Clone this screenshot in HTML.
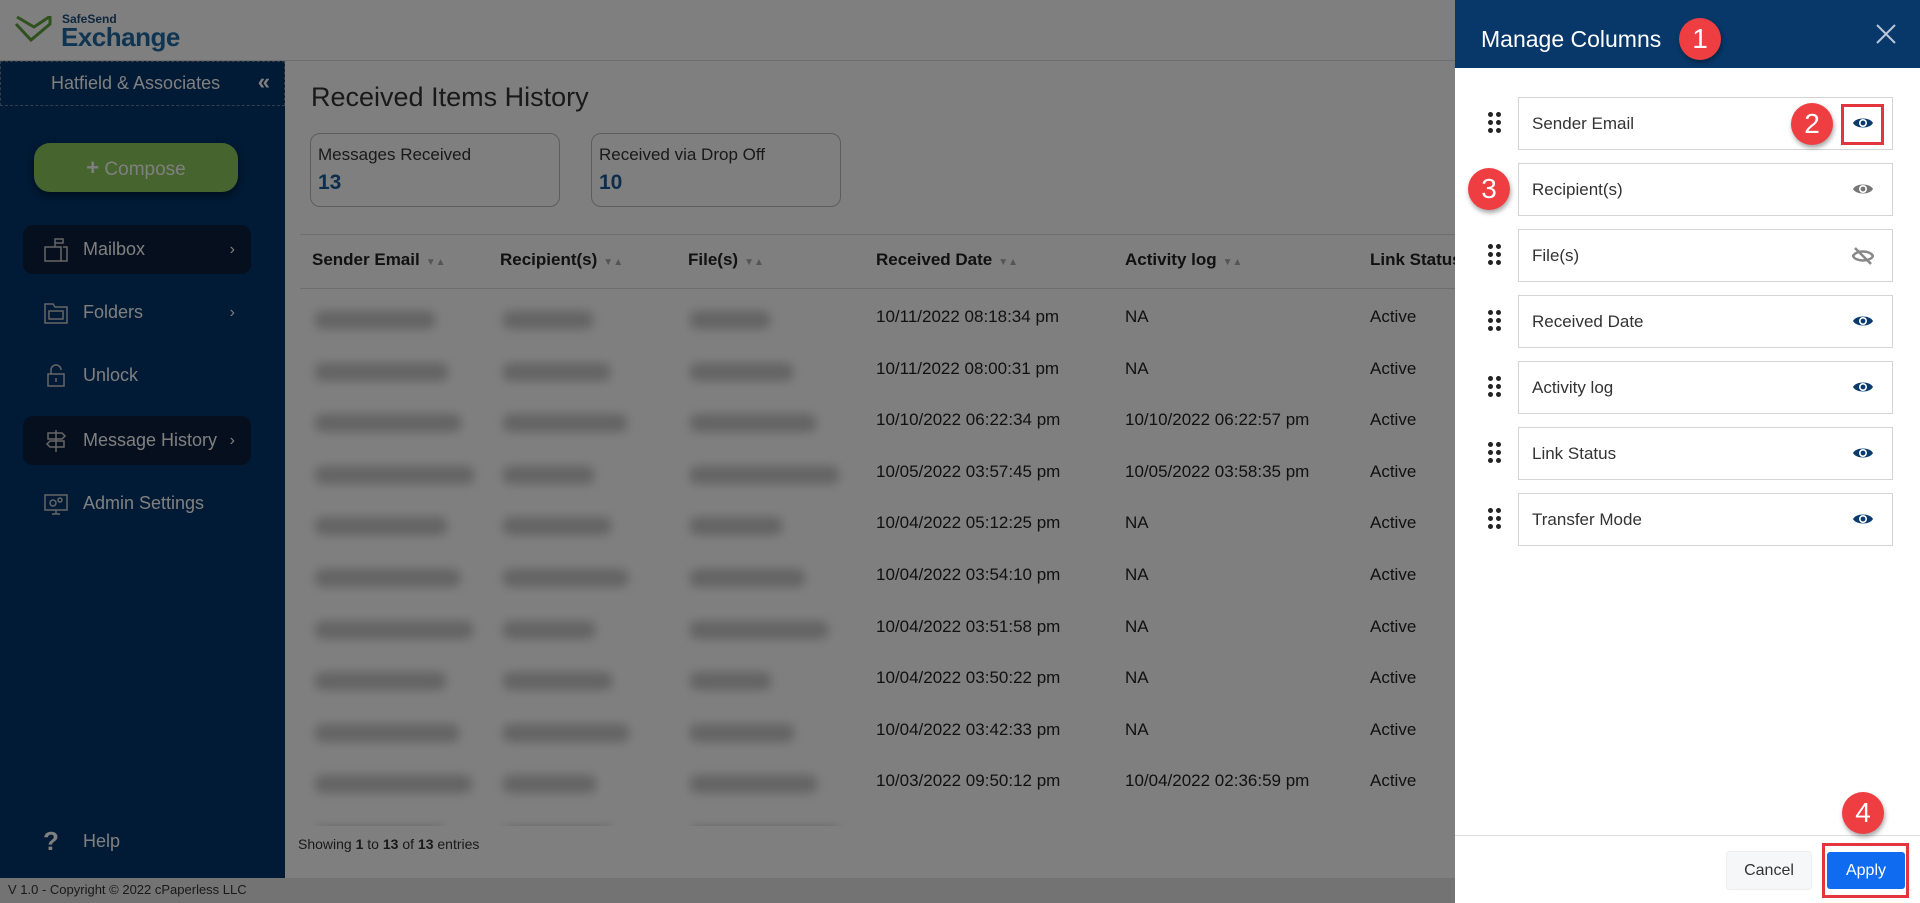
<!DOCTYPE html>
<html><head><meta charset="utf-8"><style>
*{box-sizing:border-box;margin:0;padding:0}
body{width:1920px;height:903px;overflow:hidden;font-family:"Liberation Sans",sans-serif;background:#fff;position:relative;color:#222}
.abs{position:absolute}
#hdr{left:0;top:0;width:1920px;height:61px;background:#fff;border-bottom:1px solid #ddd}
#side{left:0;top:61px;width:285px;height:817px;background:#02346a}
#foot{left:0;top:878px;width:1920px;height:25px;background:#e6e6e6;font-size:13px;color:#333;padding:4px 8px}
.nav{position:absolute;left:23px;width:228px;height:49px;border-radius:10px;color:#fff;font-size:18px;padding-left:60px;line-height:49px}
.nav.dk{background:#0a1f3d}
.nav .ar{position:absolute;right:16px;top:0;font-size:16px}
.nav svg{position:absolute;left:20px;top:12px}
.th{position:absolute;top:250px;font-size:17px;font-weight:bold;color:#222}
.th i{font-style:normal;color:#aaa;font-size:10px;margin-left:6px}
.td{position:absolute;font-size:17px;color:#222}
.bl{position:absolute;height:18px;background:#c8c8c8;filter:blur(5px);border-radius:6px}
#ov{left:0;top:0;width:1455px;height:903px;background:rgba(0,0,0,.5)}
#panel{left:1455px;top:0;width:465px;height:903px;background:#fff}
#ph{left:0;top:0;width:465px;height:68px;background:#073869;color:#fff;font-size:23px;padding:26px 26px}
.it{position:absolute;left:63px;width:375px;height:53px;border:1px solid #d4d4d4;font-size:17px;color:#333;padding:0 13px;line-height:51px}
.it svg{position:absolute;right:18px;top:17px}
.dots{position:absolute;left:33px;width:14px;height:22px}
.dots b{position:absolute;width:5px;height:5px;border-radius:50%;background:#222}
.mk{position:absolute;width:42px;height:42px;border-radius:50%;background:#ef3e42;color:#fff;font-size:28px;text-align:center;line-height:42px;box-shadow:1px 3px 5px rgba(0,0,0,.35)}
</style></head><body>
<div id="hdr" class="abs">
<svg class="abs" style="left:14px;top:14px" width="40" height="30" viewBox="0 0 40 30"><path d="M3 3 L20 13 L35 3 M2 10 L17 26 L36 10 L36 2" fill="none" stroke="#5ea33a" stroke-width="3"/></svg>
<div class="abs" style="left:62px;top:12px;font-size:12px;font-weight:bold;color:#1f4d7a">SafeSend</div>
<div class="abs" style="left:61px;top:22px;font-size:26px;font-weight:bold;color:#1f6aa5;letter-spacing:-0.5px">Exchange</div>
</div>
<div id="side" class="abs">
<div class="abs" style="left:0;top:0;width:285px;height:45px;border:1px dashed #6a7c95;color:#fff;font-size:18px;padding:11px 0 0 50px">Hatfield &amp; Associates<span style="position:absolute;right:14px;top:7px;font-size:22px;font-weight:bold">«</span></div>
<div class="abs" style="left:34px;top:82px;width:204px;height:49px;border-radius:16px;background:#8dc95a;color:#fff;font-size:19px;text-align:center;line-height:49px;box-shadow:0 4px 8px rgba(0,0,0,.4)"><b style="font-size:22px">+</b> Compose</div>
<div class="nav dk" style="top:164px"><svg width="26" height="26" viewBox="0 0 26 26" fill="none" stroke="#ccc" stroke-width="1.5"><rect x="2" y="10" width="16" height="14"/><path d="M12 10V2h8v4h-8M20 10h4v14h-6"/></svg>Mailbox<span class="ar">›</span></div>
<div class="nav" style="top:227px"><svg width="26" height="26" viewBox="0 0 26 26" fill="none" stroke="#ccc" stroke-width="1.5"><path d="M2 4h8l2 3h12v16H2z M6 11h14v8H6z"/></svg>Folders<span class="ar">›</span></div>
<div class="nav" style="top:290px"><svg width="26" height="26" viewBox="0 0 26 26" fill="none" stroke="#ccc" stroke-width="1.5"><rect x="5" y="11" width="16" height="12"/><path d="M8 11V7a5 5 0 0 1 10 0"/><path d="M13 15v4"/></svg>Unlock</div>
<div class="nav dk" style="top:355px"><svg width="26" height="26" viewBox="0 0 26 26" fill="none" stroke="#ccc" stroke-width="1.5"><path d="M13 2v22M5 5h14l3 3-3 3H5zM21 13H7l-3 3 3 3h14z"/></svg>Message History<span class="ar">›</span></div>
<div class="nav" style="top:418px"><svg width="26" height="26" viewBox="0 0 26 26" fill="none" stroke="#ccc" stroke-width="1.5"><rect x="2" y="4" width="22" height="15"/><path d="M9 23h8M13 19v4"/><circle cx="10" cy="12" r="3"/><circle cx="17" cy="9" r="2"/></svg>Admin Settings</div>
<div class="nav" style="top:756px;font-size:18px"><span style="position:absolute;left:20px;font-size:26px;font-weight:bold">?</span>Help</div>
</div>
<div id="foot" class="abs">V 1.0 - Copyright © 2022  cPaperless LLC</div>
<div class="abs" style="left:311px;top:82px;font-size:27px;color:#333">Received Items History</div>
<div class="abs" style="left:310px;top:133px;width:250px;height:74px;border:1px solid #bbb;border-radius:10px;padding:11px 7px"><div style="font-size:17px;color:#333">Messages Received</div><div style="font-size:21px;font-weight:bold;color:#1a5b9a;margin-top:6px">13</div></div>
<div class="abs" style="left:591px;top:133px;width:250px;height:74px;border:1px solid #bbb;border-radius:10px;padding:11px 7px"><div style="font-size:17px;color:#333">Received via Drop Off</div><div style="font-size:21px;font-weight:bold;color:#1a5b9a;margin-top:6px">10</div></div>
<div class="abs" style="left:300px;top:234px;width:1155px;height:1px;background:#ddd"></div>
<div class="abs" style="left:300px;top:288px;width:1155px;height:1px;background:#ddd"></div>
<div class="th" style="left:312px">Sender Email<i>▼▲</i></div>
<div class="th" style="left:500px">Recipient(s)<i>▼▲</i></div>
<div class="th" style="left:688px">File(s)<i>▼▲</i></div>
<div class="th" style="left:876px">Received Date<i>▼▲</i></div>
<div class="th" style="left:1125px">Activity log<i>▼▲</i></div>
<div class="th" style="left:1370px">Link Status</div>
<div id="rows"></div>
<script>
var d=[["10/11/2022 08:18:34 pm","NA"],["10/11/2022 08:00:31 pm","NA"],["10/10/2022 06:22:34 pm","10/10/2022 06:22:57 pm"],["10/05/2022 03:57:45 pm","10/05/2022 03:58:35 pm"],["10/04/2022 05:12:25 pm","NA"],["10/04/2022 03:54:10 pm","NA"],["10/04/2022 03:51:58 pm","NA"],["10/04/2022 03:50:22 pm","NA"],["10/04/2022 03:42:33 pm","NA"],["10/03/2022 09:50:12 pm","10/04/2022 02:36:59 pm"],["10/03/2022 06:42:38 pm","10/10/2022 07:50:51 pm"]];
var h="";for(var i=0;i<d.length;i++){var y=307+i*51.6;
h+='<div class="bl" style="left:315px;top:'+(y+4)+'px;width:'+(120+(i*13)%40)+'px"></div><div class="bl" style="left:503px;top:'+(y+4)+'px;width:'+(90+(i*17)%50)+'px"></div><div class="bl" style="left:690px;top:'+(y+4)+'px;width:'+(80+(i*23)%80)+'px"></div>';
h+='<div class="td" style="left:876px;top:'+y+'px">'+d[i][0]+'</div><div class="td" style="left:1125px;top:'+y+'px">'+d[i][1]+'</div><div class="td" style="left:1370px;top:'+y+'px">Active</div>';}
document.getElementById("rows").innerHTML=h;
</script>
<div class="abs" style="left:285px;top:826px;width:1170px;height:52px;background:#fff"></div>
<div class="abs" style="left:298px;top:836px;font-size:14px;color:#333">Showing <b>1</b> to <b>13</b> of <b>13</b> entries</div>
<div id="ov" class="abs"></div>
<div id="panel" class="abs">
<div id="ph" class="abs">Manage Columns<svg style="position:absolute;right:24px;top:24px" width="20" height="20" viewBox="0 0 20 20"><path d="M1 1L19 19M19 1L1 19" stroke="#b9c6d6" stroke-width="2"/></svg></div>
<div id="items"></div>
<div class="abs" style="left:0;top:835px;width:465px;height:1px;background:#ddd"></div>
<div class="abs" style="left:271px;top:851px;width:86px;height:39px;background:#f6f7f8;border:1px solid #eee;border-radius:3px;font-size:16px;color:#333;text-align:center;line-height:37px">Cancel</div>
<div class="abs" style="left:372px;top:852px;width:78px;height:37px;background:#0f6cf0;border-radius:3px;font-size:16px;color:#fff;text-align:center;line-height:37px">Apply</div>
<div class="abs" style="left:367px;top:843px;width:87px;height:55px;border:3px solid #e3353c"></div>
<div class="abs" style="left:386px;top:104px;width:43px;height:41px;border:3px solid #e3353c"></div>
</div>
<script>
var n=["Sender Email","Recipient(s)","File(s)","Received Date","Activity log","Link Status","Transfer Mode"];
var eye='<svg width="22" height="16" viewBox="0 0 22 16"><path d="M1 8C4 2 18 2 21 8C18 14 4 14 1 8Z" fill="@@"/><circle cx="11" cy="8" r="4" fill="#fff"/><circle cx="11" cy="8" r="2.4" fill="@@"/></svg>';
var off='<svg width="22" height="18" viewBox="0 0 22 18"><path d="M1 9C4 3 18 3 21 9C18 15 4 15 1 9Z" fill="none" stroke="#888" stroke-width="2.5"/><path d="M3 1L19 17" stroke="#888" stroke-width="2.5"/></svg>';
var h="";for(var i=0;i<7;i++){var y=97+i*66;
var ic=i==2?off:eye.split("@@").join(i==1?"#777":"#0a3b6e");
h+='<div class="it" style="top:'+y+'px">'+n[i]+ic+'</div>';
if(i!=1)h+='<div class="dots" style="top:'+(y+15)+'px"><b style="left:0;top:0"></b><b style="left:8px;top:0"></b><b style="left:0;top:8px"></b><b style="left:8px;top:8px"></b><b style="left:0;top:16px"></b><b style="left:8px;top:16px"></b></div>';}
document.getElementById("items").innerHTML=h;
</script>
<div class="mk" style="left:1679px;top:18px">1</div>
<div class="mk" style="left:1791px;top:103px">2</div>
<div class="mk" style="left:1468px;top:168px">3</div>
<div class="mk" style="left:1842px;top:792px">4</div>
</body></html>
